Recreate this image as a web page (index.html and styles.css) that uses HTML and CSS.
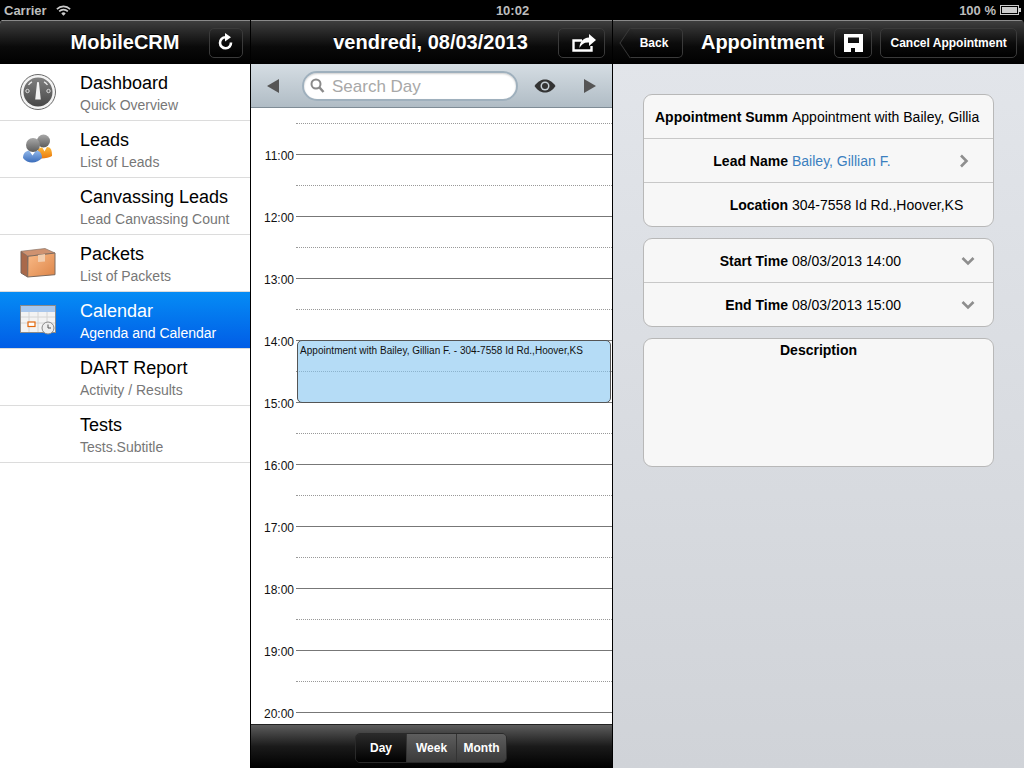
FILE: index.html
```html
<!DOCTYPE html>
<html lang="en">
<head>
    <meta charset="UTF-8">
    <title>MobileCRM</title>
    <link rel="stylesheet" href="styles.css">
</head>
<body>
    <div class="status-bar">
        <div class="status-left">
            <span>Carrier</span>
            <svg class="wifi" width="15" height="11" viewBox="0 0 17 12">
                <path d="M1 4.500a10.500 10.500 0 0 1 15 0" fill="none" stroke="#ccc" stroke-width="1.800"/>
                <path d="M3.600 7a7 7 0 0 1 9.800 0" fill="none" stroke="#ccc" stroke-width="1.800"/>
                <path d="M6 9.400a3.400 3.400 0 0 1 5 0L8.500 12z" fill="#ccc"/>
            </svg>
        </div>
        <div class="status-time">10:02</div>
        <div class="status-right">
            <span>100 %</span>
            <svg width="21" height="10" viewBox="0 0 21 10">
                <rect x="0.500" y="0.500" width="18" height="9" fill="none" stroke="#ccc"/>
                <rect x="2" y="2" width="15" height="6" fill="#ccc"/>
                <rect x="19" y="3" width="2" height="4" fill="#ccc"/>
            </svg>
        </div>
    </div>

    <div class="panes">
        <!-- left menu -->
        <div class="pane pane-menu">
            <div class="navbar navbar-center">
                <span></span>
                <div class="nav-title">MobileCRM</div>
                <button class="bar-btn btn-refresh">
                    <svg width="18" height="20" viewBox="0 0 18 20">
                        <path d="M14 9.500a5.500 5.500 0 1 1-5.500-5.200" fill="none" stroke="#fff" stroke-width="2.600"/>
                        <path d="M8 0l6 4.300-6 4.300z" fill="#fff"/>
                    </svg>
                </button>
            </div>
            <ul class="menu">
                <li class="menu-row">
                    <div class="menu-icon">
                        <svg width="36" height="36" viewBox="0 0 36 36">
                            <defs>
                                <linearGradient id="gaugeFace" x1="0" y1="0" x2="0" y2="1">
                                    <stop offset="0" stop-color="#808080"/>
                                    <stop offset="1" stop-color="#474747"/>
                                </linearGradient>
                            </defs>
                            <circle cx="18" cy="18" r="17.500" fill="#f4f4f4" stroke="#6a6a6a"/>
                            <circle cx="18" cy="18" r="14.500" fill="url(#gaugeFace)"/>
                            <path d="M8.500 11c1-1.500 2-2.500 3.500-3.200" fill="none" stroke="#e8e8e8" stroke-width="1.300"/>
                            <path d="M24 7.800c1.500.7 2.500 1.700 3.500 3.200" fill="none" stroke="#e8e8e8" stroke-width="1.300"/>
                            <circle cx="7.500" cy="17" r="1.700" fill="none" stroke="#ddd"/>
                            <circle cx="28.500" cy="17" r="1.700" fill="none" stroke="#ddd"/>
                            <path d="M18 8c.6 0 1 .4 1 1l1.800 16.500h-5.600L17 9c0-.6.400-1 1-1z" fill="#f2f2f2"/>
                        </svg>
                    </div>
                    <div class="menu-text">
                        <div class="menu-title">Dashboard</div>
                        <div class="menu-sub">Quick Overview</div>
                    </div>
                </li>
                <li class="menu-row">
                    <div class="menu-icon menu-icon-narrow">
                        <svg width="30" height="30" viewBox="0 0 30 30">
                            <defs>
                                <linearGradient id="head" x1="0" y1="0" x2="0" y2="1">
                                    <stop offset="0" stop-color="#a8a8a8"/>
                                    <stop offset="1" stop-color="#5c5c5c"/>
                                </linearGradient>
                                <linearGradient id="shirtOrange" x1="0" y1="0" x2="0" y2="1">
                                    <stop offset="0" stop-color="#fdbb3c"/>
                                    <stop offset="1" stop-color="#ea7a0e"/>
                                </linearGradient>
                                <linearGradient id="shirtBlue" x1="0" y1="0" x2="0" y2="1">
                                    <stop offset="0" stop-color="#92b8ea"/>
                                    <stop offset="1" stop-color="#3a6cba"/>
                                </linearGradient>
                            </defs>
                            <path d="M15 15c2-2 10-3 12-1s2 6 2 8c-3 2-10 3-14 2z" fill="url(#shirtOrange)"/>
                            <path d="M19 13l2.500 4.500L24 13z" fill="#fff"/>
                            <circle cx="20.500" cy="7" r="6.500" fill="url(#head)"/>
                            <path d="M0 24c0-5 3-7 6-7.500h8c3 .5 5 3 5 7.500-4 5-14 7-19 0z" fill="url(#shirtBlue)"/>
                            <path d="M6 16.500l3.500 5 3.500-5z" fill="#fff"/>
                            <circle cx="10" cy="11" r="7" fill="url(#head)"/>
                        </svg>
                    </div>
                    <div class="menu-text">
                        <div class="menu-title">Leads</div>
                        <div class="menu-sub">List of Leads</div>
                    </div>
                </li>
                <li class="menu-row">
                    <div class="menu-icon"></div>
                    <div class="menu-text">
                        <div class="menu-title">Canvassing Leads</div>
                        <div class="menu-sub">Lead Canvassing Count</div>
                    </div>
                </li>
                <li class="menu-row">
                    <div class="menu-icon">
                        <svg width="36" height="30" viewBox="0 0 36 30">
                            <defs>
                                <linearGradient id="boxFront" x1="0" y1="0" x2="1" y2="1">
                                    <stop offset="0" stop-color="#fabb88"/>
                                    <stop offset="1" stop-color="#dd8548"/>
                                </linearGradient>
                            </defs>
                            <path d="M1 3.300L8 8.300 7.700 29 1 25z" fill="#a9694a" stroke="#77645a"/>
                            <path d="M1 3.300L25 0.500l10 4.500L8 8.300z" fill="#cf9270" stroke="#8a7568" stroke-width="0.700"/>
                            <path d="M8 8.300L35 5v21.700L7.700 29z" fill="url(#boxFront)" stroke="#7d6a5e"/>
                            <path d="M18 7l7-1v7.500l-7 .5z" fill="#f2cdae"/>
                        </svg>
                    </div>
                    <div class="menu-text">
                        <div class="menu-title">Packets</div>
                        <div class="menu-sub">List of Packets</div>
                    </div>
                </li>
                <li class="menu-row menu-row-active">
                    <div class="menu-icon">
                        <svg width="36" height="30" viewBox="0 0 36 30">
                            <rect x="0.500" y="0.500" width="35" height="27" fill="#f3f3f3" stroke="#8a8a8a"/>
                            <rect x="1" y="1" width="34" height="6" fill="#a9c7ec"/>
                            <path d="M1 12h34M1 18h34M9 7v20M18 7v20M27 7v20" stroke="#d4d4d4"/>
                            <rect x="8" y="17" width="7" height="4.500" fill="#fff" stroke="#e2680c" stroke-width="1.200"/>
                            <circle cx="28" cy="23" r="6" fill="#eee" stroke="#888"/>
                            <path d="M28 19.500V23h3" fill="none" stroke="#555"/>
                        </svg>
                    </div>
                    <div class="menu-text">
                        <div class="menu-title">Calendar</div>
                        <div class="menu-sub">Agenda and Calendar</div>
                    </div>
                </li>
                <li class="menu-row">
                    <div class="menu-icon"></div>
                    <div class="menu-text">
                        <div class="menu-title">DART Report</div>
                        <div class="menu-sub">Activity / Results</div>
                    </div>
                </li>
                <li class="menu-row">
                    <div class="menu-icon"></div>
                    <div class="menu-text">
                        <div class="menu-title">Tests</div>
                        <div class="menu-sub">Tests.Subtitle</div>
                    </div>
                </li>
            </ul>
        </div>

        <!-- day view -->
        <div class="pane pane-day">
            <div class="navbar navbar-center">
                <span></span>
                <div class="nav-title nav-title-day">vendredi, 08/03/2013</div>
                <button class="bar-btn btn-share">
                    <svg width="24" height="18" viewBox="0 0 24 18">
                        <path d="M10 6.500H1.500v10h18V12" fill="none" stroke="#fff" stroke-width="2.400"/>
                        <path d="M17 0l7 6-7 6V8.500c-4.500-.5-7.500 1.500-9.500 5.500 0-6 3.500-10 9.500-10.500z" fill="#fff"/>
                    </svg>
                </button>
            </div>
            <div class="searchbar">
                <svg width="12" height="14" viewBox="0 0 12 14"><path d="M0 7l12-7v14z" fill="#555"/></svg>
                <div class="search-field">
                    <svg width="15" height="15" viewBox="0 0 15 15">
                        <circle cx="6" cy="6" r="4.500" fill="none" stroke="#8a8a8a" stroke-width="2"/>
                        <path d="M9.500 9.500l4 4.500" stroke="#8a8a8a" stroke-width="2.500"/>
                    </svg>
                    <span class="search-text">Search Day</span>
                </div>
                <svg class="eye" width="22" height="14" viewBox="0 0 22 14">
                    <path d="M0.500 7C4 2 7.500 0.500 11 0.500S18 2 21.500 7C18 12 14.500 13.500 11 13.500S4 12 0.500 7z" fill="#333"/>
                    <circle cx="11" cy="7" r="4.500" fill="#c4ced5"/>
                    <circle cx="11" cy="7" r="3" fill="#333"/>
                </svg>
                <svg width="12" height="14" viewBox="0 0 12 14"><path d="M12 7L0 0v14z" fill="#555"/></svg>
            </div>
            <div class="timeline">
                <div class="slot slot-first"><div class="slot-time"></div><div class="slot-line slot-line-half"></div></div>
                <div class="slot"><div class="slot-time">11:00</div><div class="slot-line"></div></div>
                <div class="slot"><div class="slot-time"></div><div class="slot-line slot-line-half"></div></div>
                <div class="slot"><div class="slot-time">12:00</div><div class="slot-line"></div></div>
                <div class="slot"><div class="slot-time"></div><div class="slot-line slot-line-half"></div></div>
                <div class="slot"><div class="slot-time">13:00</div><div class="slot-line"></div></div>
                <div class="slot"><div class="slot-time"></div><div class="slot-line slot-line-half"></div></div>
                <div class="slot"><div class="slot-time">14:00</div><div class="slot-line"></div></div>
                <div class="slot"><div class="slot-time"></div><div class="slot-line slot-line-half"></div></div>
                <div class="slot"><div class="slot-time">15:00</div><div class="slot-line"></div></div>
                <div class="slot"><div class="slot-time"></div><div class="slot-line slot-line-half"></div></div>
                <div class="slot"><div class="slot-time">16:00</div><div class="slot-line"></div></div>
                <div class="slot"><div class="slot-time"></div><div class="slot-line slot-line-half"></div></div>
                <div class="slot"><div class="slot-time">17:00</div><div class="slot-line"></div></div>
                <div class="slot"><div class="slot-time"></div><div class="slot-line slot-line-half"></div></div>
                <div class="slot"><div class="slot-time">18:00</div><div class="slot-line"></div></div>
                <div class="slot"><div class="slot-time"></div><div class="slot-line slot-line-half"></div></div>
                <div class="slot"><div class="slot-time">19:00</div><div class="slot-line"></div></div>
                <div class="slot"><div class="slot-time"></div><div class="slot-line slot-line-half"></div></div>
                <div class="slot"><div class="slot-time">20:00</div><div class="slot-line"></div></div>
                <div class="event">Appointment with Bailey, Gillian F. - 304-7558 Id Rd.,Hoover,KS</div>
            </div>
            <div class="toolbar">
                <div class="segments">
                    <div class="segment segment-on">Day</div>
                    <div class="segment">Week</div>
                    <div class="segment">Month</div>
                </div>
            </div>
        </div>

        <!-- appointment detail -->
        <div class="pane pane-detail">
            <div class="navbar navbar-detail">
                <button class="bar-btn btn-back">Back</button>
                <div class="nav-title">Appointment</div>
                <button class="bar-btn btn-save">
                    <svg width="19" height="18" viewBox="0 0 19 18">
                        <path d="M0 0h19v18H0zM4 3.500V9h11V3.500zM7 14v4h4v-4z" fill="#fff" fill-rule="evenodd"/>
                    </svg>
                </button>
                <button class="bar-btn btn-cancel">Cancel Appointment</button>
            </div>
            <div class="detail-body">
                <div class="group">
                    <div class="field">
                        <div class="field-label">Appointment Summ</div>
                        <div class="field-value">Appointment with Bailey, Gillia</div>
                    </div>
                    <div class="field">
                        <div class="field-label">Lead Name</div>
                        <div class="field-value field-link">Bailey, Gillian F.</div>
                        <svg class="field-arrow field-arrow-right" width="10" height="14" viewBox="0 0 10 14"><path d="M2 1.500L7.500 7 2 12.500" fill="none" stroke="#8e8e8e" stroke-width="2.600"/></svg>
                    </div>
                    <div class="field">
                        <div class="field-label">Location</div>
                        <div class="field-value">304-7558 Id Rd.,Hoover,KS</div>
                    </div>
                </div>
                <div class="group">
                    <div class="field">
                        <div class="field-label">Start Time</div>
                        <div class="field-value">08/03/2013 14:00</div>
                        <svg class="field-arrow" width="14" height="10" viewBox="0 0 14 10"><path d="M1.500 2L7 7.500 12.500 2" fill="none" stroke="#8e8e8e" stroke-width="2.600"/></svg>
                    </div>
                    <div class="field">
                        <div class="field-label">End Time</div>
                        <div class="field-value">08/03/2013 15:00</div>
                        <svg class="field-arrow" width="14" height="10" viewBox="0 0 14 10"><path d="M1.500 2L7 7.500 12.500 2" fill="none" stroke="#8e8e8e" stroke-width="2.600"/></svg>
                    </div>
                </div>
                <div class="group group-desc">Description</div>
            </div>
        </div>
    </div>
</body>
</html>
```

FILE: styles.css
```css
* {
    box-sizing: border-box;
}
body {
    margin: 0;
    width: 1024px;
    height: 768px;
    overflow: hidden;
    background-color: #000;
    font-family: "Liberation Sans", Arial, sans-serif;
}
button {
    font-family: inherit;
}

/* status bar */
.status-bar {
    height: 20px;
    padding: 0 3px 0 4px;
    display: grid;
    grid-template-columns: 1fr auto 1fr;
    align-items: center;
    color: #bdbdbd;
    font-size: 13px;
    font-weight: bold;
    background-color: #000;
}
.status-left {
    display: flex;
    align-items: center;
    gap: 9px;
}
.status-time {
    font-size: 13px;
}
.status-right {
    display: flex;
    justify-content: flex-end;
    align-items: center;
    gap: 4px;
}

/* panes */
.panes {
    display: flex;
    height: 748px;
    border-radius: 4px 4px 0 0;
    overflow: hidden;
}
.pane {
    display: flex;
    flex-direction: column;
    height: 100%;
}
.pane-menu {
    width: 251px;
    border-right: 1px solid #000;
    background-color: #fff;
}
.pane-day {
    width: 362px;
    border-right: 1px solid #000;
    background-color: #fff;
}
.pane-detail {
    width: 411px;
}

/* nav bars */
.navbar {
    height: 44px;
    flex-shrink: 0;
    align-items: center;
    padding: 0 7px;
    border-top: 1px solid #8a8a8a;
    background: linear-gradient(#3e3e3e, #0a0a0a 60%, #000);
}
.navbar-center {
    display: grid;
    grid-template-columns: 1fr auto 1fr;
}
.navbar-center .bar-btn {
    justify-self: end;
}
.navbar-detail {
    display: flex;
}
.nav-title {
    color: #fff;
    font-size: 20px;
    font-weight: bold;
    white-space: nowrap;
    text-shadow: 0 -1px 0 #000;
}
.nav-title-day {
    margin-right: 2px;
}
.bar-btn {
    height: 30px;
    padding: 0;
    display: flex;
    align-items: center;
    justify-content: center;
    color: #fff;
    font-size: 12px;
    font-weight: bold;
    border: 1px solid #3a3a3a;
    border-radius: 5px;
    background: linear-gradient(#2b2b2b, #0c0c0c 50%, #000);
}
.btn-refresh {
    width: 34px;
}
.btn-share {
    width: 47px;
    padding-left: 4px;
}
.btn-back {
    position: relative;
    width: 53px;
    margin-left: 10px;
    margin-right: 18px;
    padding-right: 4px;
    border-left: 0;
    border-radius: 0 5px 5px 0;
}
/* arrow tip of the back button */
.btn-back::before {
    content: "";
    position: absolute;
    top: 3px;
    left: -11px;
    width: 21px;
    height: 21px;
    border-left: 1px solid #3a3a3a;
    border-bottom: 1px solid #3a3a3a;
    background: linear-gradient(to bottom right, #2b2b2b, #0c0c0c 50%, #000);
    transform: scaleX(0.67) rotate(45deg);
}
.btn-save {
    width: 38px;
    margin-left: 10px;
}
.btn-cancel {
    width: 137px;
    margin-left: 8px;
}

/* left menu */
.menu {
    list-style: none;
    margin: 0;
    padding: 0;
}
.menu-row {
    height: 57px;
    display: flex;
    align-items: center;
    border-bottom: 1px solid #dcdcdc;
}
.menu-row-active {
    color: #fff;
    background: linear-gradient(#058cf5, #015de6);
}
.menu-icon {
    width: 80px;
    padding-left: 20px;
    flex-shrink: 0;
    display: flex;
    align-items: center;
}
.menu-icon-narrow {
    padding-left: 23px;
}
.menu-text {
    padding-top: 2px;
}
.menu-title {
    font-size: 18px;
    line-height: 22px;
    color: #000;
}
.menu-sub {
    margin-top: 2px;
    font-size: 14px;
    line-height: 18px;
    color: #777;
}
.menu-row-active .menu-title,
.menu-row-active .menu-sub {
    color: #fff;
}

/* search bar */
.searchbar {
    height: 44px;
    flex-shrink: 0;
    display: flex;
    align-items: center;
    padding: 0 16px;
    border-bottom: 1px solid #7f8c96;
    background: linear-gradient(#d5dde3, #b0bcc5);
}
.search-field {
    width: 216px;
    height: 30px;
    margin: 0 16px 0 23px;
    padding-left: 6px;
    display: flex;
    align-items: center;
    gap: 7px;
    color: #a8a8a8;
    font-size: 17px;
    background-color: #fff;
    border: 2px solid #9fb0bd;
    border-radius: 15px;
    box-shadow: inset 0 1px 2px rgba(0, 0, 0, 0.2);
}
.search-text {
    padding-top: 2px;
}
.eye {
    margin-right: 28px;
}

/* timeline */
.timeline {
    position: relative;
    flex: 1;
    overflow: hidden;
    background-color: #fff;
}
.slot {
    height: 31px;
    display: flex;
    align-items: flex-end;
}
.slot-first {
    height: 16px;
}
.slot-time {
    width: 43px;
    height: 14px;
    margin-bottom: -8px;
    text-align: right;
    font-size: 12px;
    line-height: 14px;
    color: #111;
}
.slot-line {
    flex: 1;
    margin-left: 2px;
    border-bottom: 1px solid #777;
}
.slot-line-half {
    border-bottom: 1px dotted #999;
}
.event {
    position: absolute;
    top: 232px;
    left: 46px;
    width: 314px;
    height: 63px;
    padding: 4px 2px;
    font-size: 10px;
    line-height: 12px;
    letter-spacing: 0.03px;
    color: #111;
    background-color: rgba(132, 197, 240, 0.6);
    border: 1px solid #555;
    border-radius: 5px;
}

/* bottom toolbar */
.toolbar {
    height: 44px;
    flex-shrink: 0;
    display: flex;
    justify-content: center;
    align-items: center;
    border-top: 1px solid #222;
    background: linear-gradient(#5c5c5c, #1a1a1a 50%, #000);
}
.segments {
    display: flex;
    height: 30px;
    margin-top: 2px;
    margin-right: 1px;
    border: 1px solid #2a2a2a;
    border-radius: 5px;
    overflow: hidden;
}
.segment {
    width: 50px;
    display: flex;
    align-items: center;
    justify-content: center;
    color: #fff;
    font-size: 12px;
    font-weight: bold;
    border-left: 1px solid #333;
    background: linear-gradient(#5e5e5e, #3a3a3a);
}
.segment-on {
    border-left: 0;
    background: linear-gradient(#2a2a2a, #000);
}

/* detail */
.detail-body {
    flex: 1;
    padding: 30px 30px 0;
    display: flex;
    flex-direction: column;
    gap: 11px;
    background: linear-gradient(#e2e5ea, #d0d3d8);
}
.group {
    width: 351px;
    background-color: #f7f7f7;
    border: 1px solid #b8b8b8;
    border-radius: 9px;
}
.field {
    height: 44px;
    display: flex;
    align-items: center;
    font-size: 14px;
    color: #000;
    border-bottom: 1px solid #c8c8c8;
}
.field:last-child {
    height: 43px;
    border-bottom: 0;
}
.field-label {
    width: 144px;
    flex-shrink: 0;
    text-align: right;
    font-weight: bold;
    white-space: nowrap;
}
.field-value {
    flex: 1;
    margin-left: 4px;
    white-space: nowrap;
    overflow: hidden;
}
.field-link {
    color: #3b7fbf;
}
.field-arrow {
    margin-right: 18px;
}
.field-arrow-right {
    margin-right: 24px;
}
.group-desc {
    height: 129px;
    padding-top: 3px;
    text-align: center;
    font-size: 14px;
    font-weight: bold;
    color: #000;
}
```
